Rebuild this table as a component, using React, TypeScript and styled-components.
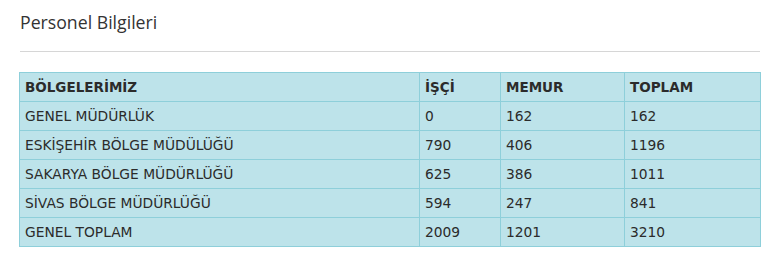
import React from "react";
import styled, { createGlobalStyle } from "styled-components";

const Global = createGlobalStyle`
  html, body { margin: 0; padding: 0; background: #ffffff; }
  body { font-family: "DejaVu Sans", Verdana, sans-serif; }
`;

const Page = styled.div`
  padding: 10px 13px 0 19px;
  width: 741px;
`;

const Title = styled.h1`
  margin: 0 0 0 1px;
  font-family: "Open Sans", "Segoe UI", sans-serif;
  font-weight: 400;
  font-size: 17.7px;
  line-height: 24px;
  color: #333333;
`;

const Divider = styled.hr`
  margin: 17px 0 20px 1px;
  border: 0;
  border-top: 1px solid #d6d6d6;
  height: 0;
`;

const Table = styled.table`
  border-collapse: collapse;
  width: 741px;
  table-layout: fixed;
  background: #bde3ea;
  font-family: "DejaVu Sans", Verdana, sans-serif;
  color: #2b2b2b;
`;

const Cell = styled.td<{ $head?: boolean }>`
  border: 1px solid #8ecfda;
  height: 29px;
  padding: 0 5px;
  box-sizing: border-box;
  vertical-align: middle;
  font-size: ${(p) => (p.$head ? "13.5px" : "13.8px")};
  font-weight: ${(p) => (p.$head ? 700 : 400)};
  white-space: nowrap;
  line-height: 16px;
`;

const widths = [400, 81, 124, 136];

const head = ["BÖLGELERİMİZ", "İŞÇİ", "MEMUR", "TOPLAM"];
const rows = [
  ["GENEL MÜDÜRLÜK", "0", "162", "162"],
  ["ESKİŞEHİR BÖLGE MÜDÜLÜĞÜ", "790", "406", "1196"],
  ["SAKARYA BÖLGE MÜDÜRLÜĞÜ", "625", "386", "1011"],
  ["SİVAS BÖLGE MÜDÜRLÜĞÜ", "594", "247", "841"],
  ["GENEL TOPLAM", "2009", "1201", "3210"],
];

export default function App() {
  return (
    <>
      <Global />
      <Page>
        <Title>Personel Bilgileri</Title>
        <Divider />
        <Table>
          <colgroup>
            {widths.map((w, i) => (
              <col key={i} style={{ width: w }} />
            ))}
          </colgroup>
          <tbody>
            <tr>
              {head.map((h) => (
                <Cell key={h} $head>
                  {h}
                </Cell>
              ))}
            </tr>
            {rows.map((r) => (
              <tr key={r[0]}>
                {r.map((c, i) => (
                  <Cell key={i}>{c}</Cell>
                ))}
              </tr>
            ))}
          </tbody>
        </Table>
      </Page>
    </>
  );
}
